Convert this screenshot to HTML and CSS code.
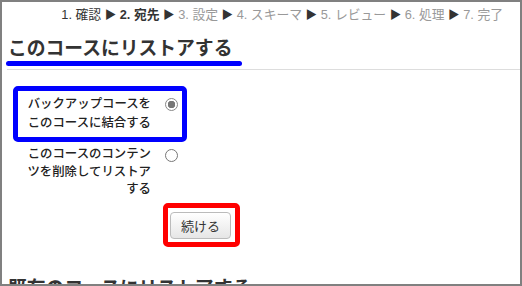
FILE: index.html
```html
<!DOCTYPE html>
<html lang="ja">
<head>
	<meta charset="UTF-8">
	<title>リストア</title>
	<link rel="stylesheet" href="styles.css">
</head>
<body>
	<div class="frame">
		<div class="steps">
			<span class="done">1. 確認</span> <span class="arrow">&#9654;</span>
			<b class="done">2. 宛先</b> <span class="arrow">&#9654;</span>
			<span>3. 設定</span> <span class="arrow">&#9654;</span>
			<span>4. スキーマ</span> <span class="arrow">&#9654;</span>
			<span>5. レビュー</span> <span class="arrow">&#9654;</span>
			<span>6. 処理</span> <span class="arrow">&#9654;</span>
			<span>7. 完了</span>
		</div>

		<h2 class="section">このコースにリストアする</h2>
		<div class="mark-blue"></div>
		<div class="rule"></div>

		<div class="form">
			<div class="fitem boxed">
				<div class="ftitle">バックアップコースをこのコースに結合する</div>
				<div class="felement"><span class="radio checked"></span></div>
			</div>
			<div class="fitem">
				<div class="ftitle">このコースのコンテンツを削除してリストアする</div>
				<div class="felement"><span class="radio"></span></div>
			</div>
			<div class="submit">
				<div class="mark-red">
					<button type="button">続ける</button>
				</div>
			</div>
		</div>

		<h2 class="section next">既存のコースにリストアする</h2>
	</div>
</body>
</html>
```

FILE: styles.css
```css
body {
	margin: 0;
	font-family: "Liberation Sans", "Noto Sans CJK JP", sans-serif;
	color: #333;
}
.frame {
	box-sizing: border-box;
	width: 522px;
	height: 286px;
	border: 2px solid #808080;
	overflow: hidden;
	background: #fff;
}
.steps {
	text-align: right;
	padding: 5px 17px 0 0;
	font-size: 12.8px;
	line-height: 16px;
	color: #999;
	white-space: nowrap;
}
.steps .done {
	color: #333;
}
.steps .arrow {
	color: #333;
	font-size: 11.5px;
}
h2.section {
	margin: 14px 0 0 6px;
	font-size: 18.8px;
	line-height: 24px;
	font-weight: bold;
	color: #333;
}
.mark-blue {
	width: 236px;
	height: 5px;
	margin: 0 0 0 4px;
	background: #0000ff;
	border-radius: 3px;
}
.rule {
	height: 1px;
	margin: 3px 0 0 5px;
	background: #ddd;
}
.form {
	padding: 16px 0 0 11px;
	font-size: 12.4px;
	font-weight: 500;
	color: #222;
}
.fitem {
	display: flex;
	box-sizing: border-box;
	width: 174px;
	padding: 4px 0 4px 9px;
	border: 5px solid transparent;
	border-radius: 5px;
}
.fitem.boxed {
	border-color: #0000ff;
	line-height: 19px;
}
.fitem + .fitem {
	padding-top: 0;
	padding-bottom: 0;
	margin-top: -1px;
	line-height: 17.5px;
}
.ftitle {
	width: 124px;
	text-align: right;
}
.felement {
	padding: 3px 0 0 14px;
}
.radio {
	display: block;
	box-sizing: border-box;
	width: 13px;
	height: 13px;
	border: 1px solid #777;
	border-radius: 50%;
	background: #fff;
}
.radio.checked {
	border-color: #888;
	background: radial-gradient(circle, #777 0 3.5px, #fff 4px);
}
.submit {
	padding: 0 0 0 150px;
	margin-top: -1px;
}
.mark-red {
	display: inline-block;
	padding: 4px 4px 3px 2px;
	border: 5px solid #ff0000;
	border-radius: 5px;
}
.mark-red button {
	display: block;
	width: 61px;
	height: 27px;
	padding: 0;
	font-family: "Liberation Sans", "Noto Sans CJK JP", sans-serif;
	font-size: 13px;
	color: #333;
	border: 1px solid #bbb;
	border-radius: 4px;
	background: linear-gradient(#fff, #e6e6e6);
}
h2.section.next {
	margin-top: 30px;
}
```
